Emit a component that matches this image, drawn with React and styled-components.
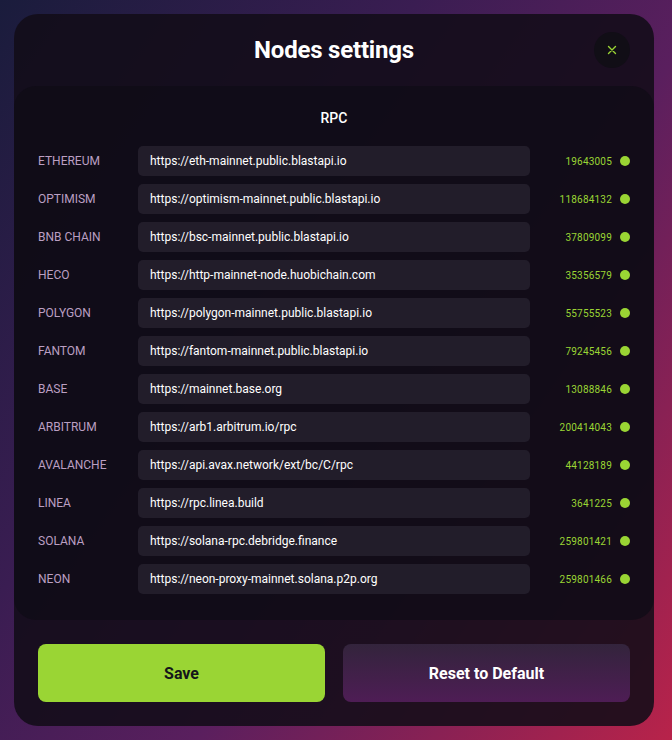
import styled, { createGlobalStyle } from 'styled-components';

const GlobalStyle = createGlobalStyle`
  html, body {
    margin: 0;
    padding: 0;
    height: 100%;
  }
  body {
    font-family: Roboto, "Liberation Sans", sans-serif;
    background: linear-gradient(125deg, #1a1c3c 0%, #3a1d52 35%, #5a1f5e 60%, #b8234a 100%);
    min-height: 740px;
  }
`;

const Page = styled.div`
  padding: 14px 18px 14px 14px;
  box-sizing: border-box;
  width: 672px;
  height: 740px;
`;

const Modal = styled.div`
  width: 640px;
  height: 712px;
  border-radius: 24px;
  background: rgba(18, 13, 24, 0.88);
  display: flex;
  flex-direction: column;
  overflow: hidden;
`;

const Header = styled.div`
  position: relative;
  height: 72px;
  display: flex;
  align-items: center;
  justify-content: center;
`;

const Title = styled.h1`
  margin: 0;
  font-size: 24px;
  font-weight: 700;
  color: #fff;
  letter-spacing: -0.2px;
`;

const CloseButton = styled.button`
  position: absolute;
  right: 24px;
  top: 18px;
  width: 36px;
  height: 36px;
  border-radius: 50%;
  border: none;
  background: #110e16;
  display: flex;
  align-items: center;
  justify-content: center;
  padding: 0;
  cursor: pointer;
`;

const Panel = styled.div`
  background: rgba(14, 12, 22, 0.7);
  border-radius: 22px;
  padding: 22px 24px 26px;
  display: flex;
  flex-direction: column;
`;

const SectionTitle = styled.div`
  text-align: center;
  color: #fff;
  font-size: 14px;
  font-weight: 500;
  line-height: 20px;
  margin-bottom: 18px;
`;

const Rows = styled.div`
  display: flex;
  flex-direction: column;
  gap: 8px;
`;

const Row = styled.div`
  display: flex;
  align-items: center;
  height: 30px;
`;

const ChainName = styled.div`
  width: 100px;
  font-size: 12px;
  color: #bb9fc2;
  text-transform: uppercase;
`;

const UrlInput = styled.div`
  width: 392px;
  height: 30px;
  box-sizing: border-box;
  border-radius: 5px;
  background: #221d2a;
  padding: 0 12px;
  display: flex;
  align-items: center;
  color: #fff;
  font-size: 12px;
`;

const Block = styled.div`
  flex: 1;
  text-align: right;
  color: #9ad534;
  font-size: 10px;
  letter-spacing: 0.2px;
  margin-right: 8px;
`;

const Dot = styled.span`
  width: 10px;
  height: 10px;
  border-radius: 50%;
  background: ${p => (p.$ok ? '#9ad534' : '#e0404a')};
`;

const Footer = styled.div`
  display: flex;
  gap: 18px;
  padding: 24px 24px 0;
`;

const Button = styled.button`
  flex: 1;
  height: 58px;
  border: none;
  border-radius: 8px;
  font-family: Roboto, "Liberation Sans", sans-serif;
  font-size: 16px;
  font-weight: 700;
  cursor: pointer;
  color: ${p => (p.$primary ? '#15151a' : '#fff')};
  background: ${p => (p.$primary ? '#9ad534' : 'linear-gradient(180deg, #33243c 0%, #4e1d55 100%)')};
`;

const nodes = [
  ['Ethereum', 'https://eth-mainnet.public.blastapi.io', '19643005'],
  ['Optimism', 'https://optimism-mainnet.public.blastapi.io', '118684132'],
  ['BNB Chain', 'https://bsc-mainnet.public.blastapi.io', '37809099'],
  ['Heco', 'https://http-mainnet-node.huobichain.com', '35356579'],
  ['Polygon', 'https://polygon-mainnet.public.blastapi.io', '55755523'],
  ['Fantom', 'https://fantom-mainnet.public.blastapi.io', '79245456'],
  ['Base', 'https://mainnet.base.org', '13088846'],
  ['Arbitrum', 'https://arb1.arbitrum.io/rpc', '200414043'],
  ['Avalanche', 'https://api.avax.network/ext/bc/C/rpc', '44128189'],
  ['Linea', 'https://rpc.linea.build', '3641225'],
  ['Solana', 'https://solana-rpc.debridge.finance', '259801421'],
  ['Neon', 'https://neon-proxy-mainnet.solana.p2p.org', '259801466'],
];

export default function App() {
  return (
    <>
      <GlobalStyle />
      <Page>
        <Modal>
          <Header>
            <Title>Nodes settings</Title>
            <CloseButton aria-label="Close">
              <svg width="10" height="10" viewBox="0 0 10 10">
                <path d="M1.5 1.5 L8.5 8.5 M8.5 1.5 L1.5 8.5" stroke="#9ad534" strokeWidth="1.4" strokeLinecap="round" />
              </svg>
            </CloseButton>
          </Header>
          <Panel>
            <SectionTitle>RPC</SectionTitle>
            <Rows>
              {nodes.map(([name, url, block]) => (
                <Row key={name}>
                  <ChainName>{name}</ChainName>
                  <UrlInput>{url}</UrlInput>
                  <Block>{block}</Block>
                  <Dot $ok />
                </Row>
              ))}
            </Rows>
          </Panel>
          <Footer>
            <Button $primary>Save</Button>
            <Button>Reset to Default</Button>
          </Footer>
        </Modal>
      </Page>
    </>
  );
}
